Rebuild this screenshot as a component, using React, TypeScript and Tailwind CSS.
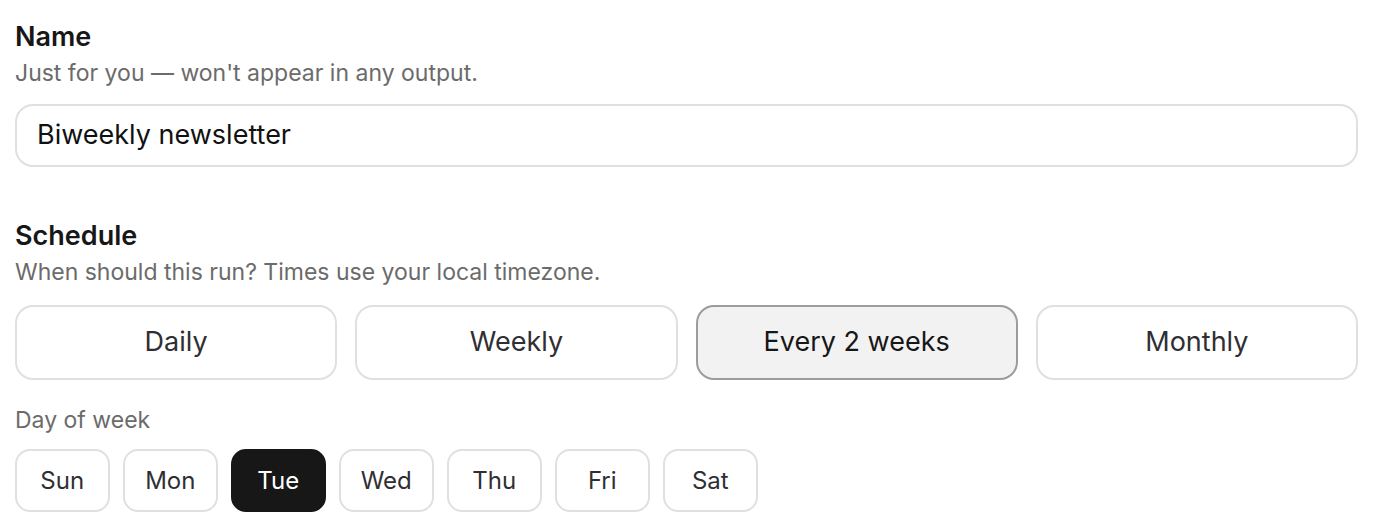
import React from "react";

const freq = ["Daily", "Weekly", "Every 2 weeks", "Monthly"];
const days = ["Sun", "Mon", "Tue", "Wed", "Thu", "Fri", "Sat"];

export default function App() {
  return (
    <div
      className="w-[1398px] h-[530px] bg-white pl-[15px] pt-[19px] overflow-hidden"
      style={{ fontFamily: "Inter, 'Noto Sans', sans-serif" }}
    >
      <div className="w-[1343px]">
        <div className="text-[27px] leading-[36px] font-semibold text-[#171717]">Name</div>
        <div className="text-[23px] leading-[30px] text-[#6b6b6b] mt-[3px]">
          Just for you — won't appear in any output.
        </div>
        <div className="mt-[16px] h-[63px] rounded-[18px] border-[2px] border-[#e0e0e0] flex items-center pl-[20px] text-[27px] text-[#111]">
          Biweekly newsletter
        </div>

        <div className="mt-[51px] text-[27px] leading-[36px] font-semibold text-[#171717]">Schedule</div>
        <div className="text-[23px] leading-[30px] text-[#6b6b6b] mt-[3px]">
          When should this run? Times use your local timezone.
        </div>
        <div className="mt-[18px] grid grid-cols-4 gap-[18px]">
          {freq.map((f) => {
            const active = f === "Every 2 weeks";
            return (
              <div
                key={f}
                className={
                  active
                    ? "h-[75px] rounded-[18px] border-[2px] border-[#9c9c9c] bg-[#f2f2f2] flex items-center justify-center text-[27px] text-[#171717]"
                    : "h-[75px] rounded-[18px] border-[2px] border-[#e0e0e0] bg-white flex items-center justify-center text-[27px] text-[#2f2f33]"
                }
              >
                {f}
              </div>
            );
          })}
        </div>

        <div className="mt-[25px] text-[23px] leading-[30px] text-[#6b6b6b]">Day of week</div>
        <div className="mt-[14px] flex gap-[13.5px]">
          {days.map((d) => {
            const active = d === "Tue";
            return (
              <div
                key={d}
                className={
                  active
                    ? "w-[94.5px] h-[63px] rounded-[15px] bg-[#171717] border-[2px] border-[#171717] flex items-center justify-center text-[24px] text-white"
                    : "w-[94.5px] h-[63px] rounded-[15px] bg-white border-[2px] border-[#e0e0e0] flex items-center justify-center text-[24px] text-[#2f2f33]"
                }
              >
                {d}
              </div>
            );
          })}
        </div>
      </div>
    </div>
  );
}
